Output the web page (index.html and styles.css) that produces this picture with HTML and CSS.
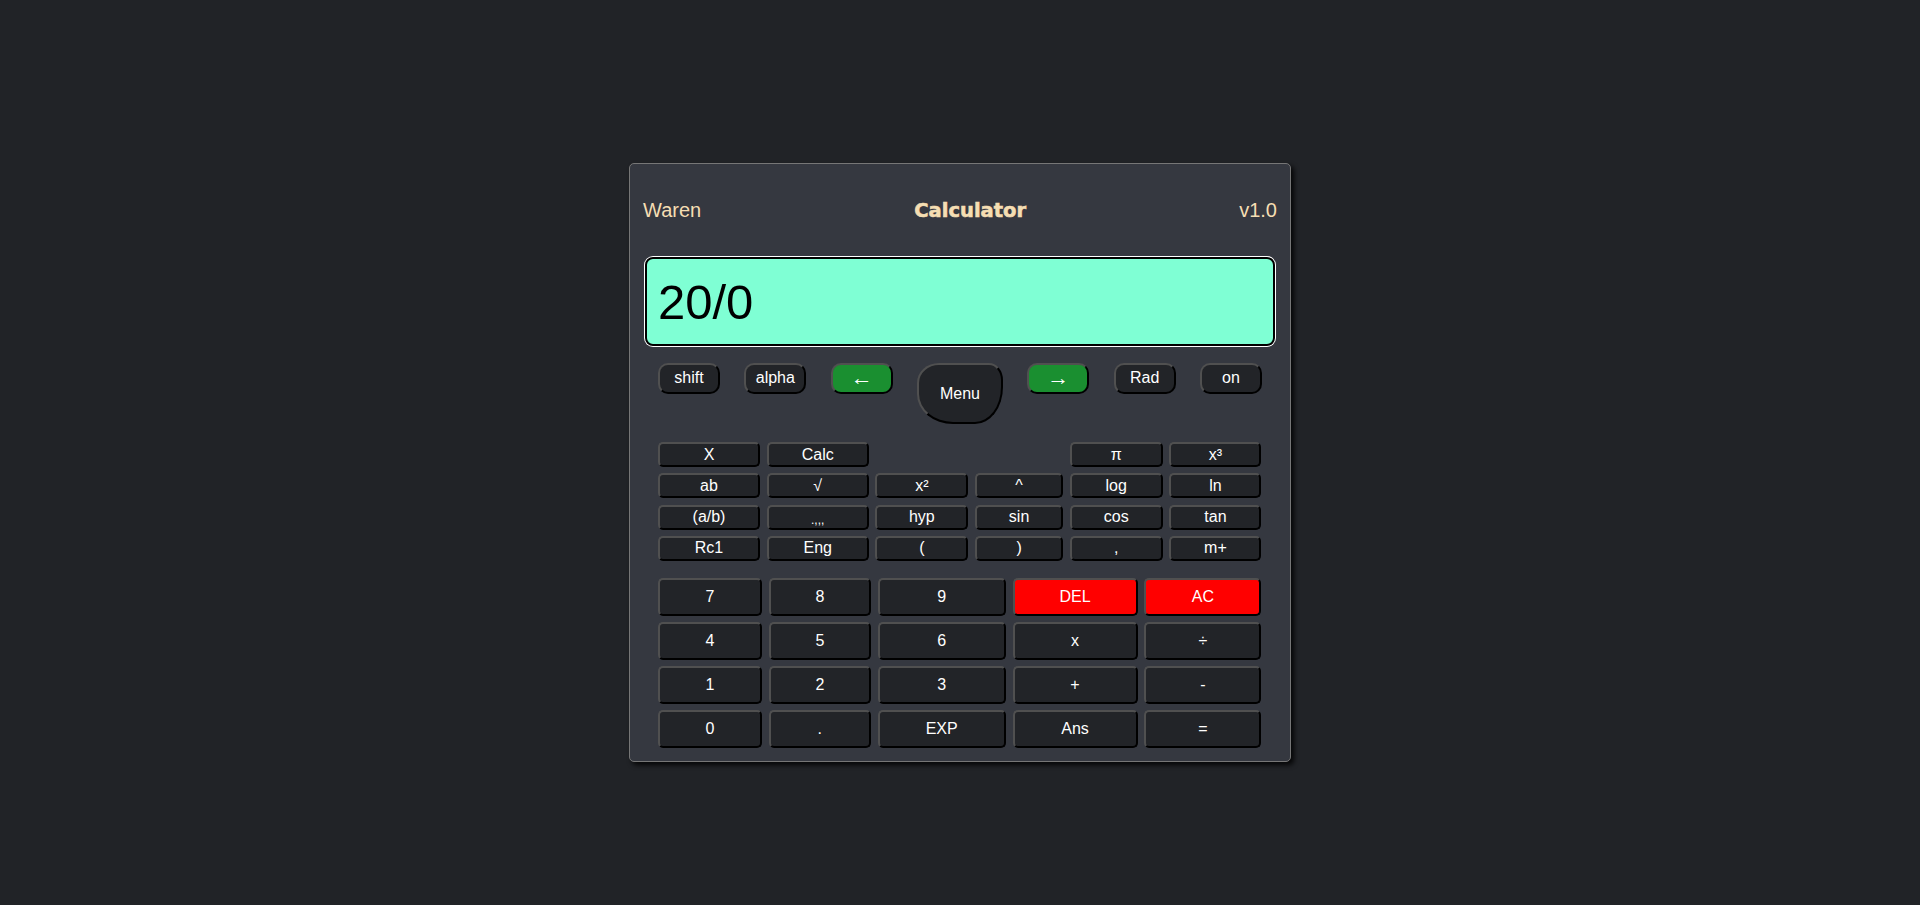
FILE: index.html
```html
<!DOCTYPE html>
<html lang="en">
<head>
<meta charset="utf-8">
<title>Calculator</title>
<link rel="stylesheet" href="styles.css">
</head>
<body>
<main class="page">
  <section class="calc">
    <header class="calc-head">
      <span class="brand">Waren</span>
      <span class="title">Calculator</span>
      <span class="ver">v1.0</span>
    </header>
    <div class="display">20/0</div>
    <div class="top-row">
      <button class="key pill">shift</button>
      <button class="key pill">alpha</button>
      <button class="key pill green arrow">&larr;</button>
      <button class="key menu">Menu</button>
      <button class="key pill green arrow">&rarr;</button>
      <button class="key pill">Rad</button>
      <button class="key pill">on</button>
    </div>
    <div class="sci-grid">
      <button class="key">X</button>
      <button class="key">Calc</button>
      <span class="blank"></span>
      <span class="blank"></span>
      <button class="key">&pi;</button>
      <button class="key">x&sup3;</button>

      <button class="key">ab</button>
      <button class="key">&radic;</button>
      <button class="key">x&sup2;</button>
      <button class="key">^</button>
      <button class="key">log</button>
      <button class="key">ln</button>

      <button class="key">(a/b)</button>
      <button class="key small">.,,,</button>
      <button class="key">hyp</button>
      <button class="key">sin</button>
      <button class="key">cos</button>
      <button class="key">tan</button>

      <button class="key">Rc1</button>
      <button class="key">Eng</button>
      <button class="key">(</button>
      <button class="key">)</button>
      <button class="key">,</button>
      <button class="key">m+</button>
    </div>
    <div class="num-grid">
      <button class="key">7</button>
      <button class="key">8</button>
      <button class="key">9</button>
      <button class="key red">DEL</button>
      <button class="key red">AC</button>

      <button class="key">4</button>
      <button class="key">5</button>
      <button class="key">6</button>
      <button class="key">x</button>
      <button class="key">&divide;</button>

      <button class="key">1</button>
      <button class="key">2</button>
      <button class="key">3</button>
      <button class="key">+</button>
      <button class="key">-</button>

      <button class="key">0</button>
      <button class="key">.</button>
      <button class="key">EXP</button>
      <button class="key">Ans</button>
      <button class="key">=</button>
    </div>
  </section>
</main>
</body>
</html>
```
FILE: styles.css
```css
html, body {
  margin: 0;
  padding: 0;
  background: #212327;
}

.page {
  min-height: 905px;
  padding-top: 163px;
  box-sizing: border-box;
  font-family: "Liberation Sans", Arial, sans-serif;
}

.calc {
  width: 662px;
  margin: 0 auto;
  box-sizing: border-box;
  background: #353840;
  border: 1px solid #767676;
  border-radius: 5px;
  box-shadow: 3px 3px 5px rgba(0, 0, 0, 0.85);
  padding: 0 13px 13px;
  display: flex;
  flex-direction: column;
}

.calc-head {
  height: 92px;
  display: flex;
  align-items: center;
  justify-content: space-between;
  color: #f5deb3;
  font-size: 20px;
}

.calc-head .title {
  font-family: "DejaVu Sans", "Liberation Sans", sans-serif;
  font-weight: bold;
  font-size: 19.5px;
  -webkit-text-stroke: 0.6px #f5deb3;
}

.display {
  margin: 1px 2px 0;
  height: 89px;
  box-sizing: border-box;
  background: #7fffd4;
  border: 2px solid #000;
  border-radius: 8px;
  box-shadow: 0 0 0 1px #fff;
  color: #000;
  font-size: 49px;
  display: flex;
  align-items: center;
  padding-left: 11px;
}

.key {
  font-family: "Liberation Sans", Arial, sans-serif;
  font-size: 16px;
  color: #fff;
  background: #222428;
  border-style: solid;
  border-width: 2px;
  border-color: #505050 #000 #000 #505050;
  border-radius: 5px;
  padding: 0;
  margin: 0;
  box-sizing: border-box;
  display: flex;
  align-items: center;
  justify-content: center;
  line-height: 1;
}

.top-row {
  margin: 17px 15px 0;
  height: 61px;
  display: flex;
  justify-content: space-between;
  align-items: flex-start;
}

.pill {
  width: 62px;
  height: 31px;
  border-radius: 10px;
  padding-bottom: 1px;
}

.green {
  background: #1a8f30;
}

.arrow {
  font-size: 22px;
  padding-bottom: 2px;
}

.menu {
  width: 86px;
  height: 61px;
  border-radius: 22px 14px 28px 36px / 20px 17px 37px 30px;
}

.sci-grid {
  margin: 18px 15px 0;
  display: grid;
  grid-template-columns: 102px 102px 93px 88px 93px 92px;
  grid-auto-rows: 25px;
  column-gap: 6.7px;
  row-gap: 6.33px;
}

.sci-grid .small {
  font-size: 12px;
  padding-top: 6px;
}

.num-grid {
  margin: 17px 15px 0;
  display: grid;
  grid-template-columns: 104px 102px 128px 125px 117px;
  grid-auto-rows: 38px;
  column-gap: 6.85px;
  row-gap: 6px;
}

.red {
  background: #ff0000;
}
```
